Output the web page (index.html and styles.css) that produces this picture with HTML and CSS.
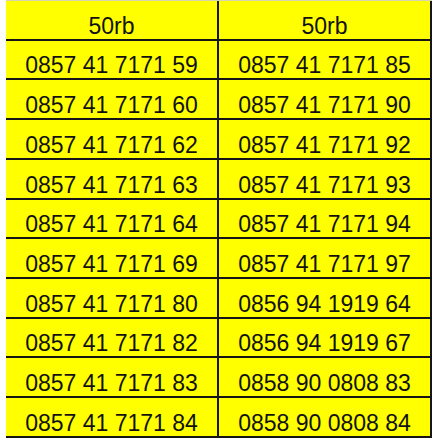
FILE: index.html
```html
<!DOCTYPE html>
<html>
<head>
<meta charset="utf-8">
<link rel="stylesheet" href="styles.css">
</head>
<body>
<div class="sheet">
  <div class="cell">50rb</div><div class="cell">50rb</div>
  <div class="cell">0857 41 7171 59</div><div class="cell">0857 41 7171 85</div>
  <div class="cell">0857 41 7171 60</div><div class="cell">0857 41 7171 90</div>
  <div class="cell">0857 41 7171 62</div><div class="cell">0857 41 7171 92</div>
  <div class="cell">0857 41 7171 63</div><div class="cell">0857 41 7171 93</div>
  <div class="cell">0857 41 7171 64</div><div class="cell">0857 41 7171 94</div>
  <div class="cell">0857 41 7171 69</div><div class="cell">0857 41 7171 97</div>
  <div class="cell">0857 41 7171 80</div><div class="cell">0856 94 1919 64</div>
  <div class="cell">0857 41 7171 82</div><div class="cell">0856 94 1919 67</div>
  <div class="cell">0857 41 7171 83</div><div class="cell">0858 90 0808 83</div>
  <div class="cell">0857 41 7171 84</div><div class="cell">0858 90 0808 84</div>
</div>
</body>
</html>
```
FILE: styles.css
```css
html, body {
  margin: 0;
  padding: 0;
  background: #ffffff;
}
body {
  padding-left: 6px;
  width: 439px;
  height: 439px;
  box-sizing: border-box;
  overflow: hidden;
}
.sheet {
  display: grid;
  grid-template-columns: 211px 211px;
  grid-template-rows: repeat(11, 37.73px);
  gap: 2px;
  width: max-content;
  padding: 0 2px 2px 0;
  background: #151515;
  border-top: 1px solid #d6d6b0;
}
.cell {
  background: #ffff00;
  color: #111111;
  font-family: "Liberation Sans", Arial, sans-serif;
  font-size: 23px;
  line-height: 26px;
  display: flex;
  align-items: flex-end;
  justify-content: center;
  padding-bottom: 0;
}
```
